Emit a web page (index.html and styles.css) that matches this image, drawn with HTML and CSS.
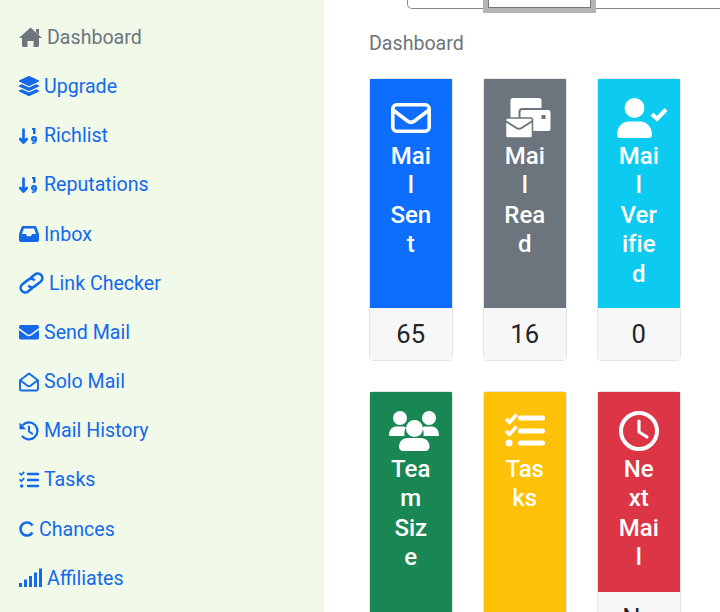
FILE: index.html
```html
<!DOCTYPE html>
<html lang="en">
<head>
    <meta charset="UTF-8">
    <meta name="viewport" content="width=device-width, initial-scale=1.0">
    <title>Dashboard</title>
    <link rel="stylesheet" href="styles.css">
</head>
<body>
    <aside class="sidebar">
        <a class="nav-link active" href="#">
            <svg width="23" height="20" viewBox="0 0 23 20"><path fill="currentColor" d="M11.500.500L23 11h-3v7.500a1.500 1.500 0 0 1-1.500 1.500h-4v-6h-6v6h-4A1.500 1.500 0 0 1 3 18.500V11H0zM17 2h3v6l-3-3z"/></svg>
            Dashboard
        </a>
        <a class="nav-link" href="#">
            <svg width="20" height="20" viewBox="0 0 512 512"><path fill="currentColor" d="M12.41 148.02l232.94 105.67c6.8 3.09 14.49 3.09 21.29 0l232.94-105.67c16.55-7.51 16.55-32.52 0-40.03L266.65 2.31a25.607 25.607 0 0 0-21.29 0L12.41 107.98c-16.55 7.51-16.55 32.53 0 40.04zm487.18 88.28l-58.09-26.33-161.64 73.27c-7.56 3.43-15.59 5.17-23.86 5.17s-16.29-1.74-23.86-5.17L70.51 209.97l-58.1 26.33c-16.55 7.5-16.55 32.5 0 40l232.94 105.59c6.8 3.08 14.49 3.08 21.29 0L499.59 276.3c16.55-7.5 16.55-32.5 0-40zm0 127.8l-57.87-26.23-161.86 73.37c-7.56 3.43-15.59 5.17-23.86 5.17s-16.29-1.74-23.86-5.17L70.29 337.87 12.41 364.1c-16.55 7.5-16.55 32.5 0 40l232.94 105.59c6.8 3.08 14.49 3.08 21.29 0L499.59 404.1c16.55-7.5 16.55-32.5 0-40z"/></svg>
            Upgrade
        </a>
        <a class="nav-link" href="#">
            <svg width="20" height="20" viewBox="0 0 20 20"><path fill="none" stroke="currentColor" stroke-width="2.700" stroke-linecap="round" stroke-linejoin="round" d="M4.500 3.500v13M1.300 13l3.200 3.500 3.200-3.500"/><path fill="currentColor" d="M13 2h3.500v6h-2.500V4h-1z"/><path fill="currentColor" fill-rule="evenodd" d="M15 10a3 3 0 0 1 3 3.300c0 2.500-1.500 4.700-3.500 4.700-1 0-1.500-.3-2-.7l.8-1.100c.4.200.8.300 1.200.300.5 0 1-.3 1.200-.9-2.300.6-3.700-.9-3.700-2.500A3 3 0 0 1 15 10zm0 2.200a.8.8 0 1 0 0 1.600.8.8 0 0 0 0-1.600z"/></svg>
            Richlist
        </a>
        <a class="nav-link" href="#">
            <svg width="20" height="20" viewBox="0 0 20 20"><path fill="none" stroke="currentColor" stroke-width="2.700" stroke-linecap="round" stroke-linejoin="round" d="M4.500 3.500v13M1.300 13l3.200 3.500 3.200-3.500"/><path fill="currentColor" d="M13 2h3.500v6h-2.500V4h-1z"/><path fill="currentColor" fill-rule="evenodd" d="M15 10a3 3 0 0 1 3 3.300c0 2.500-1.500 4.700-3.500 4.700-1 0-1.500-.3-2-.7l.8-1.100c.4.200.8.300 1.200.300.5 0 1-.3 1.200-.9-2.300.6-3.700-.9-3.700-2.500A3 3 0 0 1 15 10zm0 2.200a.8.8 0 1 0 0 1.600.8.8 0 0 0 0-1.600z"/></svg>
            Reputations
        </a>
        <a class="nav-link" href="#">
            <svg width="20" height="20" viewBox="0 0 20 20"><path fill="currentColor" fill-rule="evenodd" d="M4.500 2h11c1 0 1.700.5 2.100 1.400L20 10v6c0 1.100-.9 2-2 2H2c-1.100 0-2-.9-2-2v-6l2.400-6.600C2.800 2.500 3.500 2 4.500 2zm.4 2.500L3 10h4l1 2.200h4L13 10h4l-1.900-5.500z"/></svg>
            Inbox
        </a>
        <a class="nav-link" href="#">
            <svg width="25" height="22" viewBox="1.500 1.500 22 19"><g fill="none" stroke="currentColor" stroke-width="2.300" transform="rotate(-38 12.500 11)"><path d="M10.500 15H5.500a4 4 0 0 1 0-8h7a4 4 0 0 1 3.500 4"/><path d="M14.500 7h5a4 4 0 0 1 0 8h-7a4 4 0 0 1-3.500-4"/></g></svg>
            Link Checker
        </a>
        <a class="nav-link" href="#">
            <svg width="20" height="20" viewBox="0 0 20 20"><rect y="3" width="20" height="14.500" rx="1.800" fill="currentColor"/><path fill="none" stroke="#f1f9e9" stroke-width="1.600" d="M-.5 6.500l8.200 6.200c1.400 1 3.200 1 4.600 0l8.200-6.200"/></svg>
            Send Mail
        </a>
        <a class="nav-link" href="#">
            <svg width="20" height="20" viewBox="0 0 20 20"><path fill="none" stroke="currentColor" stroke-width="1.900" stroke-linejoin="round" d="M1 8.200L10 1.500l9 6.700V17c0 .8-.6 1.500-1.500 1.500h-15C1.600 18.500 1 17.800 1 17z"/><path fill="none" stroke="currentColor" stroke-width="1.900" d="M1.500 8.500l7 5.300c.9.700 2.100.7 3 0l7-5.300"/></svg>
            Solo Mail
        </a>
        <a class="nav-link" href="#">
            <svg width="20" height="20" viewBox="0 0 20 20"><path fill="none" stroke="currentColor" stroke-width="2.200" d="M3.600 4.200A8.500 8.500 0 1 1 3 14.800"/><path fill="currentColor" d="M.5 1.500v6.700h6.700z"/><path fill="none" stroke="currentColor" stroke-width="2" stroke-linecap="round" stroke-linejoin="round" d="M10 5.500V10.500l3.200 2.300"/></svg>
            Mail History
        </a>
        <a class="nav-link" href="#">
            <svg width="20" height="20" viewBox="0 0 20 20"><path fill="none" stroke="currentColor" stroke-width="1.700" stroke-linecap="round" stroke-linejoin="round" d="M1 3.500l1.300 1.300L4.800 2.300M1 9.800l1.300 1.300 2.500-2.500"/><circle cx="2.700" cy="16" r="1.800" fill="currentColor"/><path fill="none" stroke="currentColor" stroke-width="2.400" stroke-linecap="round" d="M9 4h10M9 10h10M9 16h10"/></svg>
            Tasks
        </a>
        <a class="nav-link" href="#">
            <svg width="15" height="20" viewBox="0 0 15 20"><path fill="none" stroke="currentColor" stroke-width="2.600" d="M13.500 6.500A6.500 6.500 0 1 0 13.500 13.500"/></svg>
            Chances
        </a>
        <a class="nav-link" href="#">
            <svg width="23" height="20" viewBox="0 0 23 20"><path fill="currentColor" d="M0 15h3v4H0zM5 11.500h3V19H5zM10 8h3v11h-3zM15 4.500h3V19h-3zM20 .5h3V19h-3z"/></svg>
            Affiliates
        </a>
    </aside>

    <main class="content">
        <div class="topbar">
            <div class="topbar-tab"></div>
        </div>
        <div class="page-title">Dashboard</div>
        <div class="cards">
            <div class="card">
                <div class="card-head bg-blue">
                    <svg width="40" height="40" viewBox="0 0 40 40"><rect x="1.800" y="6.800" width="36.400" height="26.400" rx="4" fill="none" stroke="currentColor" stroke-width="3.600"/><path fill="none" stroke="currentColor" stroke-width="3.600" d="M2 12l14.500 11c2 1.500 5 1.500 7 0L38 12"/></svg>
                    <span>Mail Sent</span>
                </div>
                <div class="card-foot">65</div>
            </div>
            <div class="card">
                <div class="card-head bg-gray">
                    <svg width="48" height="40" viewBox="-1.500 0 48 40"><rect x="5" y="0" width="31" height="22" rx="2.500" fill="currentColor"/><rect x="14" y="11" width="32" height="23" rx="3" fill="currentColor" stroke="#6c757d" stroke-width="2"/><rect x="36" y="17" width="4" height="4" fill="#6c757d"/><rect x="0" y="20" width="27" height="20" rx="2" fill="currentColor" stroke="#6c757d" stroke-width="1.500"/><path fill="none" stroke="#6c757d" stroke-width="2" d="M0 23l11 7c1.500 1 3.500 1 5 0l11-7"/></svg>
                    <span>Mail Read</span>
                </div>
                <div class="card-foot">16</div>
            </div>
            <div class="card">
                <div class="card-head bg-cyan">
                    <svg width="50" height="40" viewBox="1 0 50 40"><circle cx="17.500" cy="10" r="10" fill="currentColor"/><path fill="currentColor" d="M0 37c0-9 6-13.500 12-13.500h11C29 23.500 35 28 35 37c0 1.700-1.300 3-3 3H3c-1.700 0-3-1.300-3-3z"/><path fill="none" stroke="currentColor" stroke-width="4" d="M35 16l5 5 9-9.500"/></svg>
                    <span>Mail Verified</span>
                </div>
                <div class="card-foot">0</div>
            </div>
            <div class="card">
                <div class="card-head bg-green">
                    <svg width="50" height="40" viewBox="1 0 50 40"><circle cx="11" cy="7" r="7" fill="currentColor"/><circle cx="40" cy="7" r="7" fill="currentColor"/><path fill="currentColor" d="M0 25c0-6 3-9.500 7-9.500h7c1 0 2 .3 3 .8-1.500 2.500-2 5.700-1.500 8.700zM50 25c0-6-3-9.500-7-9.500h-7c-1 0-2 .3-3 .8 1.500 2.500 2 5.700 1.500 8.700z"/><circle cx="25.500" cy="17.500" r="8.500" fill="currentColor"/><path fill="currentColor" d="M10 36c0-6 4-9 9-9h12.500c5 0 9 3 9 9 0 2.200-1.800 4-4 4H14c-2.200 0-4-1.800-4-4z"/></svg>
                    <span>Team Size</span>
                </div>
            </div>
            <div class="card">
                <div class="card-head bg-yellow">
                    <svg width="40" height="40" viewBox="0 0 40 40"><path fill="none" stroke="currentColor" stroke-width="3.500" d="M1 8l3.500 3.500L11.500 3.500M1 20l3.500 3.500 7-8"/><circle cx="4" cy="32" r="3.500" fill="currentColor"/><path fill="none" stroke="currentColor" stroke-width="5" stroke-linecap="round" d="M15.500 7h22M15.500 20h22M15.500 32h22"/></svg>
                    <span>Tasks</span>
                </div>
            </div>
            <div class="card">
                <div class="card-head bg-red">
                    <svg width="40" height="40" viewBox="0 0 40 40"><circle cx="20" cy="20" r="18" fill="none" stroke="currentColor" stroke-width="4"/><path fill="none" stroke="currentColor" stroke-width="3.200" stroke-linecap="round" stroke-linejoin="round" d="M20 10v11l8 5"/></svg>
                    <span>Next Mail</span>
                </div>
                <div class="card-foot">No</div>
            </div>
        </div>
    </main>
</body>
</html>
```

FILE: styles.css
```css
* {
    margin: 0;
    padding: 0;
    box-sizing: border-box;
    font-family: Roboto, 'Liberation Sans', sans-serif;
}

body {
    display: flex;
    height: 612px;
    overflow: hidden;
    background-color: #ffffff;
    color: #212529;
}

.sidebar {
    flex: 0 0 324px;
    padding: 12.7px 0 0 19px;
    background-color: #f1f9e9;
}

.nav-link {
    display: flex;
    align-items: center;
    gap: 5px;
    height: 49.2px;
    font-size: 19.6px;
    color: #1369ea;
    text-decoration: none;
}

.nav-link.active {
    color: #6c757d;
}

.content {
    flex: 1;
    padding-left: 45px;
}

.topbar {
    display: flex;
    height: 9px;
    margin-left: 38px;
    margin-right: -10px;
    border: 1px solid #888888;
    border-top: none;
    border-radius: 0 0 5px 5px;
}

.topbar-tab {
    flex: none;
    width: 113px;
    height: 13px;
    margin-left: 75px;
    background-color: #ffffff;
    border: 5px solid #b4b4b4;
    border-top: none;
    box-shadow: inset 0 -1px 0 #777777, inset 1px 0 0 #777777, inset -1px 0 0 #777777;
}

.page-title {
    margin-top: 24px;
    font-size: 19.6px;
    line-height: 22px;
    color: #6c757d;
}

.cards {
    display: flex;
    flex-wrap: wrap;
    gap: 30px 30.5px;
    width: 320px;
    margin-top: 23px;
}

.card {
    display: flex;
    flex-direction: column;
    width: 83.5px;
    min-height: 283px;
    border: 1px solid rgba(0, 0, 0, 0.1);
    border-radius: 4px;
}

.card-head {
    height: 229px;
    padding: 19px 20px 0;
    font-size: 24px;
    font-weight: 500;
    line-height: 29.4px;
    text-align: center;
    color: #ffffff;
    overflow-wrap: anywhere;
    font-variant-ligatures: none;
}

.card-head svg {
    display: block;
    margin: 0 auto 4px;
    overflow: visible;
}

.card-foot {
    height: 52px;
    font-size: 25.6px;
    line-height: 52px;
    text-align: center;
    background-color: #f7f7f7;
}

.bg-blue { background-color: #0d6efd; }
.bg-gray { background-color: #6c757d; }
.bg-cyan { background-color: #0dcaf0; }
.bg-green { background-color: #198754; }
.bg-yellow { background-color: #ffc107; }
.bg-red { background-color: #dc3545; height: 200px; }
```
